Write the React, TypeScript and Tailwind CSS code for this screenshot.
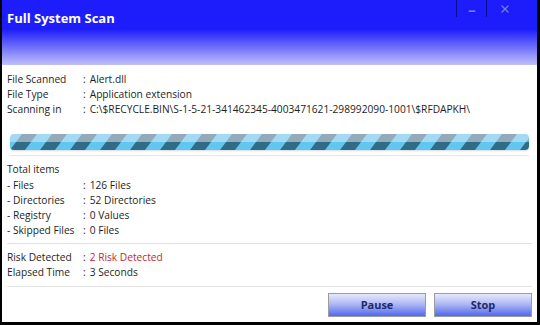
import { Minus, X } from 'lucide-react';

const fileInfo = [
  { label: 'File Scanned', value: 'Alert.dll' },
  { label: 'File Type', value: 'Application extension' },
  { label: 'Scanning in', value: 'C:\\$RECYCLE.BIN\\S-1-5-21-341462345-4003471621-298992090-1001\\$RFDAPKH\\' },
];

const totals = [
  { label: '- Files', value: '126 Files' },
  { label: '- Directories', value: '52 Directories' },
  { label: '- Registry', value: '0 Values' },
  { label: '- Skipped Files', value: '0 Files' },
];

function Row({ label, value, red }: { label: string; value: string; red?: boolean }) {
  return (
    <div className="flex h-[15px] items-center leading-[15px]">
      <span className="w-[76px] shrink-0">{label}</span>
      <span className="mr-[4px]">:</span>
      <span className={red ? 'text-[#c8262c]' : ''}>{value}</span>
    </div>
  );
}

function ProgressBar() {
  return (
    <div className="mx-[4px] h-[16px] overflow-hidden rounded-[4px] shadow-[0_1px_2px_rgba(0,0,0,0.15)]">
      <svg width="100%" height="16">
        <defs>
          <pattern id="stripes" width="30" height="16" patternUnits="userSpaceOnUse">
            <rect x="0" y="0" width="30" height="8" fill="#a3d9f2" />
            <rect x="0" y="8" width="30" height="8" fill="#62c7ef" />
            <polygon points="0,16 15,16 21,8 6,8" fill="#2f6c88" />
            <polygon points="6,8 21,8 27,0 12,0" fill="#92aaba" />
          </pattern>
        </defs>
        <rect width="100%" height="16" fill="url(#stripes)" />
      </svg>
    </div>
  );
}

export default function App() {
  return (
    <div
      className="w-[540px] h-[325px] overflow-hidden bg-white border-l-2 border-r-[3px] border-b-[3px] border-black text-[10.2px] text-[#1e1e1e]"
      style={{ fontFamily: '"Open Sans", "Noto Sans", sans-serif' }}
    >
      {/* Header */}
      <div className="relative h-[65px] bg-[linear-gradient(to_bottom,#1d1dfb_0%,#1d1dfb_45%,#c0c0fa_100%)]">
        <div className="pl-[5px] pt-[8px] text-[13px] font-bold text-white leading-[20px]">Full System Scan</div>
        <div className="absolute right-0 top-0 flex h-[17px]">
          <div className="w-px bg-[#0c0c9a]" />
          <button className="flex w-[29px] items-end justify-center pb-[1px] text-[#8b9be0]">
            <Minus className="h-[10px] w-[10px]" strokeWidth={3} />
          </button>
          <div className="w-px bg-[#0c0c9a]" />
          <button className="flex w-[50px] items-center justify-start pl-[12px] text-[#6f80de]">
            <X className="h-[12px] w-[12px]" strokeWidth={2.5} />
          </button>
        </div>
      </div>

      {/* Body */}
      <div className="px-[4px]">
        <div className="pt-[7px] px-[1px]">
          {fileInfo.map((r) => (
            <Row key={r.label} label={r.label} value={r.value} />
          ))}
        </div>

        <div className="mt-[17px]">
          <ProgressBar />
        </div>
        <div className="mx-[4px] mt-[5px] h-px bg-[#e6e6e6]" />

        <div className="pt-[6px] px-[1px]">
          <div className="h-[15px] leading-[15px] mb-[1px]">Total items</div>
          {totals.map((r) => (
            <Row key={r.label} label={r.label} value={r.value} />
          ))}
        </div>
        <div className="mx-[1px] mt-[5px] h-px bg-[#e3e3e3]" />

        <div className="pt-[6px] px-[1px]">
          <Row label="Risk Detected" value="2 Risk Detected" red />
          <Row label="Elapsed Time" value="3 Seconds" />
        </div>
        <div className="mx-[1px] mt-[6px] h-px bg-[#e3e3e3]" />

        <div className="flex justify-end gap-[8px] pt-[6px] pr-[1px]">
          <button className="h-[24px] w-[98px] border border-[#9c9c9c] bg-[linear-gradient(to_bottom,#e6e9fc_0%,#afb9f4_45%,#5268ee_100%)] text-[11px] font-bold text-[#1b2a6a]">
            Pause
          </button>
          <button className="h-[24px] w-[98px] border border-[#9c9c9c] bg-[linear-gradient(to_bottom,#e6e9fc_0%,#afb9f4_45%,#5268ee_100%)] text-[11px] font-bold text-[#1b2a6a]">
            Stop
          </button>
        </div>
      </div>
    </div>
  );
}
